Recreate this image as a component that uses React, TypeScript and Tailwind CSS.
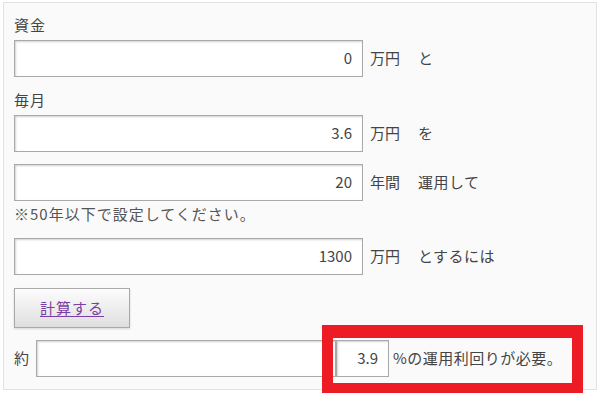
import React from 'react'

const font = { fontFamily: '"Noto Sans CJK JP", "Noto Sans", sans-serif' }

function NumBox({ value, className = '' }: { value: string; className?: string }) {
    return (
        <div
            className={`h-[37px] bg-white border border-[#a9a9a9] shadow-[inset_1px_1px_2px_rgba(0,0,0,0.18)] flex items-center justify-end pr-[10px] text-[15px] text-[#444] ${className}`}
        >
            {value}
        </div>
    )
}

function Row({ value, unit, tail }: { value: string; unit: string; tail?: string }) {
    return (
        <div className="flex items-center">
            <NumBox value={value} className="w-[349px]" />
            <span className="ml-[7px] text-[15px] text-[#444]">{unit}</span>
            {tail && <span className="ml-[18px] text-[15px] tracking-[0.5px] text-[#444]">{tail}</span>}
        </div>
    )
}

export default function App() {
    return (
        <div className="relative w-[600px] h-[393px] overflow-hidden bg-white" style={font}>
            <div className="ml-[3px] mt-[2px] w-[594px] border border-[#e3e3e3] bg-[#fafafa] pl-[10px] pt-[12px] pb-[12px]">
                <div className="h-[20px] leading-[20px] text-[15px] tracking-[1px] text-[#444]">資金</div>
                <div className="mt-[5px]">
                    <Row value="0" unit="万円" tail="と" />
                </div>

                <div className="mt-[13px] h-[20px] leading-[20px] text-[15px] tracking-[1px] text-[#444]">毎月</div>
                <div className="mt-[5px]">
                    <Row value="3.6" unit="万円" tail="を" />
                </div>

                <div className="mt-[12px]">
                    <Row value="20" unit="年間" tail="運用して" />
                </div>
                <div className="mt-[3px] h-[20px] leading-[20px] text-[15px] tracking-[1px] text-[#555]">
                    ※50年以下で設定してください。
                </div>

                <div className="mt-[14px]">
                    <Row value="1300" unit="万円" tail="とするには" />
                </div>

                <button className="mt-[13px] w-[116px] h-[40px] border border-[#a9a9a9] bg-gradient-to-b from-[#fdfdfd] to-[#dedede] shadow-[0_1px_2px_rgba(0,0,0,0.15)] text-[15px] tracking-[1px] text-[#7b3fa6] underline underline-offset-2 flex items-center justify-center">
                    計算する
                </button>

                <div className="mt-[12px] flex items-center">
                    <span className="text-[15px] text-[#444]">約</span>
                    <NumBox value="" className="ml-[7px] w-[300px]" />
                    <NumBox value="3.9" className="w-[53px] pr-[8px]" />
                    <span className="ml-[4px] text-[15px] tracking-[0.5px] text-[#444]">%の運用利回りが必要。</span>
                </div>
            </div>

            <div className="absolute left-[322px] top-[325px] w-[261px] h-[78px] border-t-[13px] border-x-[11px] border-b-[20px] border-[#ed1c24]" />
        </div>
    )
}
